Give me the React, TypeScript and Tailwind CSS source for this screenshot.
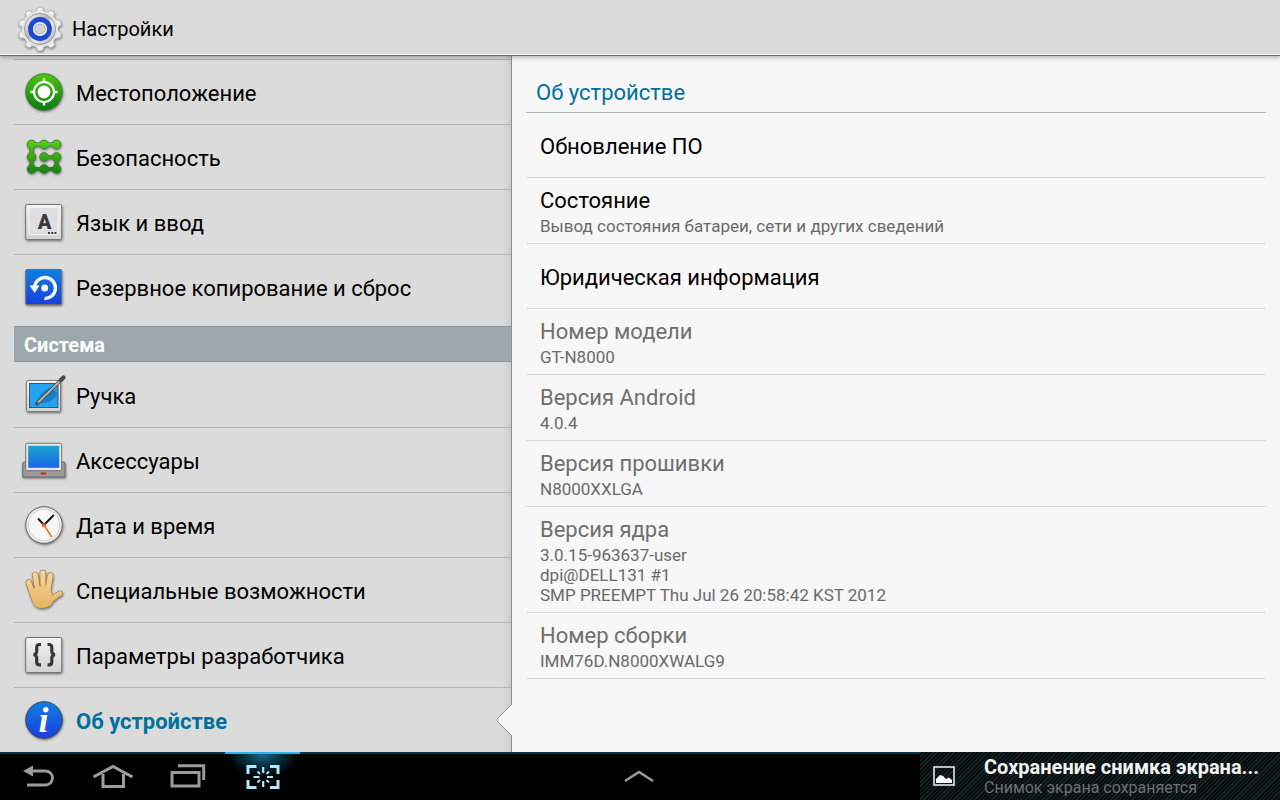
import React from 'react';

interface MenuItem {
  label: string;
  icon: React.ReactNode;
  selected?: boolean;
}

interface InfoRow {
  title: string;
  lines?: string[];
  disabled?: boolean;
}

function IconBox({ children }: { children: React.ReactNode }) {
  return (
    <svg viewBox="0 0 44 44" className="size-11 shrink-0 overflow-visible" aria-hidden="true">
      {children}
    </svg>
  );
}

// Shared gradients, referenced by every icon
function IconDefs() {
  return (
    <svg width="0" height="0" className="absolute" aria-hidden="true">
      <defs>
        <linearGradient id="green" x1="0" y1="0" x2="0" y2="1">
          <stop offset="0" stopColor="#4cc80c" />
          <stop offset="1" stopColor="#087c0c" />
        </linearGradient>
        <linearGradient id="nodes" gradientUnits="userSpaceOnUse" x1="0" y1="5" x2="0" y2="39">
          <stop offset="0" stopColor="#56d40c" />
          <stop offset="1" stopColor="#148212" />
        </linearGradient>
        <linearGradient id="blue" x1="0" y1="0" x2="0" y2="1">
          <stop offset="0" stopColor="#0f7fe4" />
          <stop offset="1" stopColor="#1b3fdc" />
        </linearGradient>
        <linearGradient id="screen" x1="0" y1="0" x2="0" y2="1">
          <stop offset="0" stopColor="#1ba3cf" />
          <stop offset="1" stopColor="#1769ea" />
        </linearGradient>
        <linearGradient id="plate" x1="0" y1="0" x2="0" y2="1">
          <stop offset="0" stopColor="#f4f4f4" />
          <stop offset="1" stopColor="#d2d2d2" />
        </linearGradient>
        <linearGradient id="skin" gradientUnits="userSpaceOnUse" x1="0" y1="2" x2="0" y2="40">
          <stop offset="0" stopColor="#f7d79c" />
          <stop offset="1" stopColor="#e5b463" />
        </linearGradient>
        <linearGradient id="metal" x1="0" y1="0" x2="1" y2="1">
          <stop offset="0" stopColor="#ffffff" />
          <stop offset="0.45" stopColor="#b4b4b4" />
          <stop offset="0.6" stopColor="#e9e9e9" />
          <stop offset="1" stopColor="#a6a6a6" />
        </linearGradient>
        <filter id="drop" x="-20%" y="-20%" width="150%" height="150%">
          <feDropShadow dx="0.5" dy="1.2" stdDeviation="0.8" floodColor="#000" floodOpacity="0.5" />
        </filter>
      </defs>
    </svg>
  );
}

function GearIcon() {
  const teeth = [0, 36, 72, 108, 144, 180, 216, 252, 288, 324];
  return (
    <svg viewBox="0 0 48 48" className="size-12 shrink-0" aria-hidden="true">
      <g filter="url(#drop)">
        {teeth.map(a => (
          <path key={a} d="M19.5 8 L21.6 2.6 Q24 1.4 26.4 2.6 L28.5 8 Z" fill="#eeeeee" stroke="#a9a9a9" strokeWidth="0.7" transform={`rotate(${a} 24 24)`} />
        ))}
        <circle cx="24" cy="24" r="18" fill="#e6e6e6" />
      </g>
      <circle cx="24" cy="24" r="15.6" fill="url(#metal)" stroke="#8e8e8e" strokeWidth="0.8" />
      <circle cx="24" cy="24" r="9.2" fill="#d8d8d8" stroke="#1c4bd0" strokeWidth="5.4" />
      <circle cx="24" cy="24" r="6.4" fill="#d2d2d2" stroke="#f4f4f4" strokeWidth="1.4" />
      <circle cx="24" cy="24" r="5" fill="none" stroke="#8d95a8" strokeWidth="0.5" />
    </svg>
  );
}

function LocationIcon() {
  return (
    <IconBox>
      <circle cx="22" cy="22" r="18.3" fill="url(#green)" stroke="#4c5a4c" strokeWidth="0.8" filter="url(#drop)" />
      <circle cx="22" cy="22" r="10" fill="none" stroke="#fff" strokeWidth="2.2" />
      <path d="M22 8.5V13M22 31v4.5M8.5 22H13M31 22h4.5" stroke="#fff" strokeWidth="2.4" />
      <circle cx="22" cy="22" r="6.4" fill="#fff" />
    </IconBox>
  );
}

function SecurityIcon() {
  const nodes = [[9.5, 9.5], [22, 9.5], [34.5, 9.5], [9.5, 22], [22, 22], [34.5, 22], [9.5, 34], [22, 34], [34.5, 34]];
  return (
    <IconBox>
      <g filter="url(#drop)">
        <path d="M34.5 9.5H9.5V34H34.5V22H22" fill="none" stroke="#456245" strokeWidth="4.2" />
        {nodes.map(([x, y]) => (
          <circle key={`${x}-${y}`} cx={x} cy={y} r="4.7" fill="#456245" />
        ))}
        <path d="M34.5 9.5H9.5V34H34.5V22H22" fill="none" stroke="url(#nodes)" strokeWidth="2.8" />
        {nodes.map(([x, y]) => (
          <circle key={`${x}-${y}`} cx={x} cy={y} r="4" fill="url(#nodes)" />
        ))}
      </g>
    </IconBox>
  );
}

function Plate({ fill }: { fill: string }) {
  return <rect x="3.7" y="4.5" width="36" height="35" rx="1.5" fill={fill} stroke="#6b6b6b" strokeWidth="0.9" filter="url(#drop)" />;
}

function LanguageIcon() {
  return (
    <IconBox>
      <Plate fill="url(#plate)" />
      <rect x="7" y="7.5" width="29.5" height="27" rx="2" fill="#dfdfdf" stroke="#f2f2f2" />
      <text x="22.5" y="29" textAnchor="middle" fontFamily="Roboto, sans-serif" fontWeight="900" fontSize="20" fill="#3a3a3a">A</text>
      <path d="M26 33h8.5" stroke="#3a3a3a" strokeWidth="2" strokeDasharray="2 1.2" />
    </IconBox>
  );
}

function BackupIcon() {
  return (
    <IconBox>
      <Plate fill="url(#blue)" />
      <path d="M12.5 22a10.5 10.5 0 1 1 10 11.500" fill="none" stroke="#f4f6fb" strokeWidth="3.4" />
      <path d="M7.5 20.5h10l-4.8 7.5z" fill="#f4f6fb" />
      <circle cx="22.7" cy="23" r="3.5" fill="#f4f6fb" />
    </IconBox>
  );
}

function PenIcon() {
  return (
    <IconBox>
      <rect x="4.5" y="7.5" width="34" height="31" rx="1.5" fill="url(#plate)" stroke="#777" strokeWidth="0.9" filter="url(#drop)" />
      <rect x="7.5" y="10.5" width="28.5" height="24" fill="#22a4f2" stroke="#2c4a63" strokeWidth="0.9" />
      <path d="M14 31Q16 20 29 14L35 20Q34 30 14 31" fill="#1572b5" opacity="0.75" />
      <path d="M15 30.5L39.5 6.5" stroke="#4b4b4b" strokeWidth="3.6" strokeLinecap="round" />
      <path d="M16 29.5L38 8" stroke="#b5b5b5" strokeWidth="1.8" />
      <path d="M39 7L41.5 4.5" stroke="#4b4b4b" strokeWidth="4.2" strokeLinecap="round" />
    </IconBox>
  );
}

function AccessoryIcon() {
  return (
    <IconBox>
      <path d="M0.8 25.5Q0.8 24 2.3 24H41.5Q43 24 43 25.5V39H0.8z" fill="#9a9a9a" stroke="#5e5e5e" strokeWidth="0.9" filter="url(#drop)" />
      <rect x="3.7" y="5.2" width="36" height="27.5" rx="1.5" fill="#e6e6e6" stroke="#666" strokeWidth="0.9" />
      <rect x="6.2" y="7.8" width="31" height="22" fill="url(#screen)" />
      <path d="M18.8 35.5h5.4" stroke="#d81e10" strokeWidth="1.9" />
    </IconBox>
  );
}

function ClockIcon() {
  return (
    <IconBox>
      <circle cx="22" cy="22" r="18.3" fill="#ededed" stroke="#555" strokeWidth="0.9" filter="url(#drop)" />
      <circle cx="22" cy="22" r="15.8" fill="#f7f7f7" stroke="#c6c6c6" strokeWidth="0.8" />
      <path d="M16 15.5l6 6.5 9.8-10" fill="none" stroke="#151515" strokeWidth="1.9" />
      <path d="M22 22l7.7 12" stroke="#f2722a" strokeWidth="1.6" />
      <circle cx="22" cy="22.3" r="2" fill="#f2621a" />
    </IconBox>
  );
}

function HandIcon() {
  const fingers = 'M6.8 14.5L11 27M13.2 6.8L16 24M20.8 4.8L21.2 24M28.3 7.5L25.8 24';
  const thumb = 'M38 25.5Q34 27 27 34';
  const palm = 'M8.5 22Q9 37 16 39.500Q23 41.5 29 37Q33 32 27.5 20Q18 16 8.5 22z';
  return (
    <IconBox>
      <g filter="url(#drop)" strokeLinecap="round">
        <path d={fingers} fill="none" stroke="#8b6d3c" strokeWidth="6.2" />
        <path d={thumb} fill="none" stroke="#8b6d3c" strokeWidth="5.8" />
        <path d={palm} fill="#e9bc70" stroke="#8b6d3c" strokeWidth="1" />
        <path d={fingers} fill="none" stroke="url(#skin)" strokeWidth="5.2" />
        <path d={thumb} fill="none" stroke="url(#skin)" strokeWidth="4.8" />
        <path d={palm} fill="url(#skin)" />
      </g>
    </IconBox>
  );
}

function DeveloperIcon() {
  return (
    <IconBox>
      <Plate fill="url(#plate)" />
      <path
        d="M19 11.5h-1.5q-2.8 0-2.8 3v4q0 2.5-3 3.2q3 0.700 3 3.2v4q0 3 2.8 3H19M25.5 11.5H27q2.8 0 2.8 3v4q0 2.5 3 3.2q-3 0.700-3 3.2v4q0 3-2.8 3H25.5"
        fill="none"
        stroke="#383838"
        strokeWidth="3.2"
      />
    </IconBox>
  );
}

function InfoIcon() {
  return (
    <IconBox>
      <circle cx="22" cy="22" r="18.3" fill="url(#blue)" stroke="#3d4250" strokeWidth="0.9" filter="url(#drop)" />
      <text x="21.5" y="33.5" textAnchor="middle" fontFamily="Liberation Serif, serif" fontStyle="italic" fontWeight="700" fontSize="36" fill="#fff">i</text>
    </IconBox>
  );
}

const networkItems: MenuItem[] = [
  { label: 'Местоположение', icon: <LocationIcon /> },
  { label: 'Безопасность', icon: <SecurityIcon /> },
  { label: 'Язык и ввод', icon: <LanguageIcon /> },
  { label: 'Резервное копирование и сброс', icon: <BackupIcon /> },
];

const systemItems: MenuItem[] = [
  { label: 'Ручка', icon: <PenIcon /> },
  { label: 'Аксессуары', icon: <AccessoryIcon /> },
  { label: 'Дата и время', icon: <ClockIcon /> },
  { label: 'Специальные возможности', icon: <HandIcon /> },
  { label: 'Параметры разработчика', icon: <DeveloperIcon /> },
  { label: 'Об устройстве', icon: <InfoIcon />, selected: true },
];

const infoRows: InfoRow[] = [
  { title: 'Обновление ПО' },
  { title: 'Состояние', lines: ['Вывод состояния батареи, сети и других сведений'] },
  { title: 'Юридическая информация' },
  { title: 'Номер модели', lines: ['GT-N8000'], disabled: true },
  { title: 'Версия Android', lines: ['4.0.4'], disabled: true },
  { title: 'Версия прошивки', lines: ['N8000XXLGA'], disabled: true },
  { title: 'Версия ядра', lines: ['3.0.15-963637-user', 'dpi@DELL131 #1', 'SMP PREEMPT Thu Jul 26 20:58:42 KST 2012'], disabled: true },
  { title: 'Номер сборки', lines: ['IMM76D.N8000XWALG9'], disabled: true },
];

function MenuList({ items }: { items: MenuItem[] }) {
  return (
    <ul>
      {items.map(item => (
        <li key={item.label} className="relative border-t border-[#b4b4b4] first:border-t-transparent">
          <button
            className={
              item.selected
                ? 'flex h-16 w-full items-center gap-2.5 px-2 text-left text-[22px] font-bold text-[#00719c]'
                : 'flex h-16 w-full items-center gap-2.5 px-2 text-left text-[22px] text-black'
            }
          >
            {item.icon}
            <span className="truncate pt-0.5">{item.label}</span>
          </button>
          {item.selected && (
            <svg viewBox="0 0 16 32" className="absolute -right-px top-4 h-8 w-4" aria-hidden="true">
              <path d="M16 0L1.5 14.5Q0.5 16 1.5 17.5L16 32z" fill="#f7f7f7" />
              <path d="M16 0L1.5 14.5Q0.5 16 1.5 17.5L16 32" fill="none" stroke="#8a8a8a" />
            </svg>
          )}
        </li>
      ))}
    </ul>
  );
}

function InfoItem({ row }: { row: InfoRow }) {
  if (!row.lines) {
    return (
      <li className="border-b border-[#dadada]">
        <button className="block h-16 w-full px-3.5 pt-0.5 text-left text-[22px] text-black">{row.title}</button>
      </li>
    );
  }
  return (
    <li className="border-b border-[#dadada] px-3.5 pt-2 pb-[7px]">
      <h2 className={row.disabled ? 'text-[22px] leading-[30px] text-[#6f6f6f]' : 'text-[22px] leading-[30px] text-black'}>{row.title}</h2>
      {row.lines.map(line => (
        <p key={line} className="text-[17px] leading-5 text-[#6a6a6a]">{line}</p>
      ))}
    </li>
  );
}

function NavBar() {
  return (
    <footer className="flex h-12 shrink-0 bg-black">
      <nav className="flex flex-1 border-t-2 border-[#083544] text-[#9b9b9b]">
        <button aria-label="Назад" className="flex w-[75px] items-center justify-center pb-0.5">
          <svg width="36" height="28" viewBox="0 0 36 28" fill="none" stroke="currentColor" strokeWidth="2.8">
            <path d="M8 9H25.5a7 7 0 0 1 0 14H7" />
            <path d="M3 9L13 3.500V14.5z" fill="currentColor" stroke="none" />
          </svg>
        </button>
        <button aria-label="Домой" className="flex w-[75px] items-center justify-center pb-0.5">
          <svg width="40" height="28" viewBox="0 0 40 28" fill="none" stroke="currentColor" strokeWidth="3">
            <path d="M0.5 15L20 4.5L39.5 15" />
            <path d="M10 12V24.5H30.5V12" />
          </svg>
        </button>
        <button aria-label="Недавние" className="flex w-[75px] items-center justify-center pb-0.5">
          <svg width="36" height="28" viewBox="0 0 36 28" fill="none" stroke="currentColor" strokeWidth="3">
            <path d="M2 10.5H29V24H2z" />
            <path d="M8 3.7H33.7V18" />
          </svg>
        </button>
        <button
          aria-label="Снимок экрана"
          className="-mt-0.5 flex w-[75px] items-center justify-center border-t-2 border-[#27b4f0] bg-[radial-gradient(36px_24px_at_top,#176a88_0%,#07303f_50%,transparent_100%)]"
        >
          <svg width="36" height="26" viewBox="0 0 36 26" fill="none" stroke="#b4e6fc" strokeWidth="3">
            <path d="M3 10V2.5H11.5M25 2.5H33V10M33 16V23.5H25M11.5 23.5H3V16" />
            <path d="M18.2 3V9M18.2 17V23M8.5 13H14.5M22 13H28" strokeWidth="2.2" />
            <path d="M12.5 7.5L15 10M24 7.5L21.5 10M12.5 18.5L15 16M24 18.5L21.5 16" strokeWidth="1.8" />
          </svg>
        </button>
        <button aria-label="Показать панель" className="mr-auto ml-[309px] flex w-15 items-center justify-center pb-0.5">
          <svg width="30" height="12" viewBox="0 0 30 12" fill="none" stroke="currentColor" strokeWidth="2.4">
            <path d="M1 11L15 2L29 11" />
          </svg>
        </button>
      </nav>
      <section className="flex w-[360px] bg-[repeating-linear-gradient(135deg,#182527_0px,#182527_1px,#090d0e_1px,#090d0e_3px)] pl-3">
        <svg width="24" height="24" viewBox="0 0 24 24" className="mt-3 shrink-0" fill="none" aria-hidden="true">
          <rect x="2" y="3" width="20" height="18" stroke="#e8e8e8" strokeWidth="1.6" />
          <path d="M4 19V15L8 11L11 12L14 15L17 13.5L20 16V19z" fill="#fff" />
        </svg>
        <div className="ml-7">
          <p className="pt-0.5 text-[20px] leading-[26px] font-bold whitespace-nowrap text-[#f2f2f2]">Сохранение снимка экрана...</p>
          <p className="text-[16px] leading-4 whitespace-nowrap text-[#6e7070]">Снимок экрана сохраняется</p>
        </div>
      </section>
    </footer>
  );
}

export default function App() {
  return (
    <div className="flex h-screen flex-col overflow-hidden bg-[#dbdbdb] font-[Roboto,sans-serif]">
      <IconDefs />
      <header className="relative z-10 flex h-14 shrink-0 items-center gap-2 border-b border-[#6c6c6c] bg-[#dbdbdb] pt-0.5 pl-4 shadow-[inset_0_-1px_0_#f2f2f2,0_1px_5px_rgba(0,0,0,0.35)]">
        <GearIcon />
        <h1 className="text-[20px] text-black">Настройки</h1>
      </header>

      <div className="flex min-h-0 flex-1">
        <aside className="w-2/5 border-r border-[#8e8e8e] bg-[linear-gradient(to_left,#cccccc_0px,#dbdbdb_8px)] pl-3.5">
          <div className="mt-[3px] -mb-px border-t border-[#b4b4b4]" />
          <MenuList items={networkItems} />
          <h2 className="mt-[7px] flex h-9 items-center border-y border-[#8f9a9f] bg-[#9da7ac] px-2.5 pt-0.5 text-[20px] font-bold text-white">Система</h2>
          <MenuList items={systemItems} />
        </aside>

        <main className="flex-1 overflow-hidden bg-[#f7f7f7] px-3.5">
          <h1 className="flex h-[57px] items-end border-b border-[#aab4bb] px-2.5 pb-[3px] text-[22px] text-[#00719c]">Об устройстве</h1>
          <ul>
            {infoRows.map(row => (
              <InfoItem key={row.title} row={row} />
            ))}
          </ul>
        </main>
      </div>

      <NavBar />
    </div>
  );
}
